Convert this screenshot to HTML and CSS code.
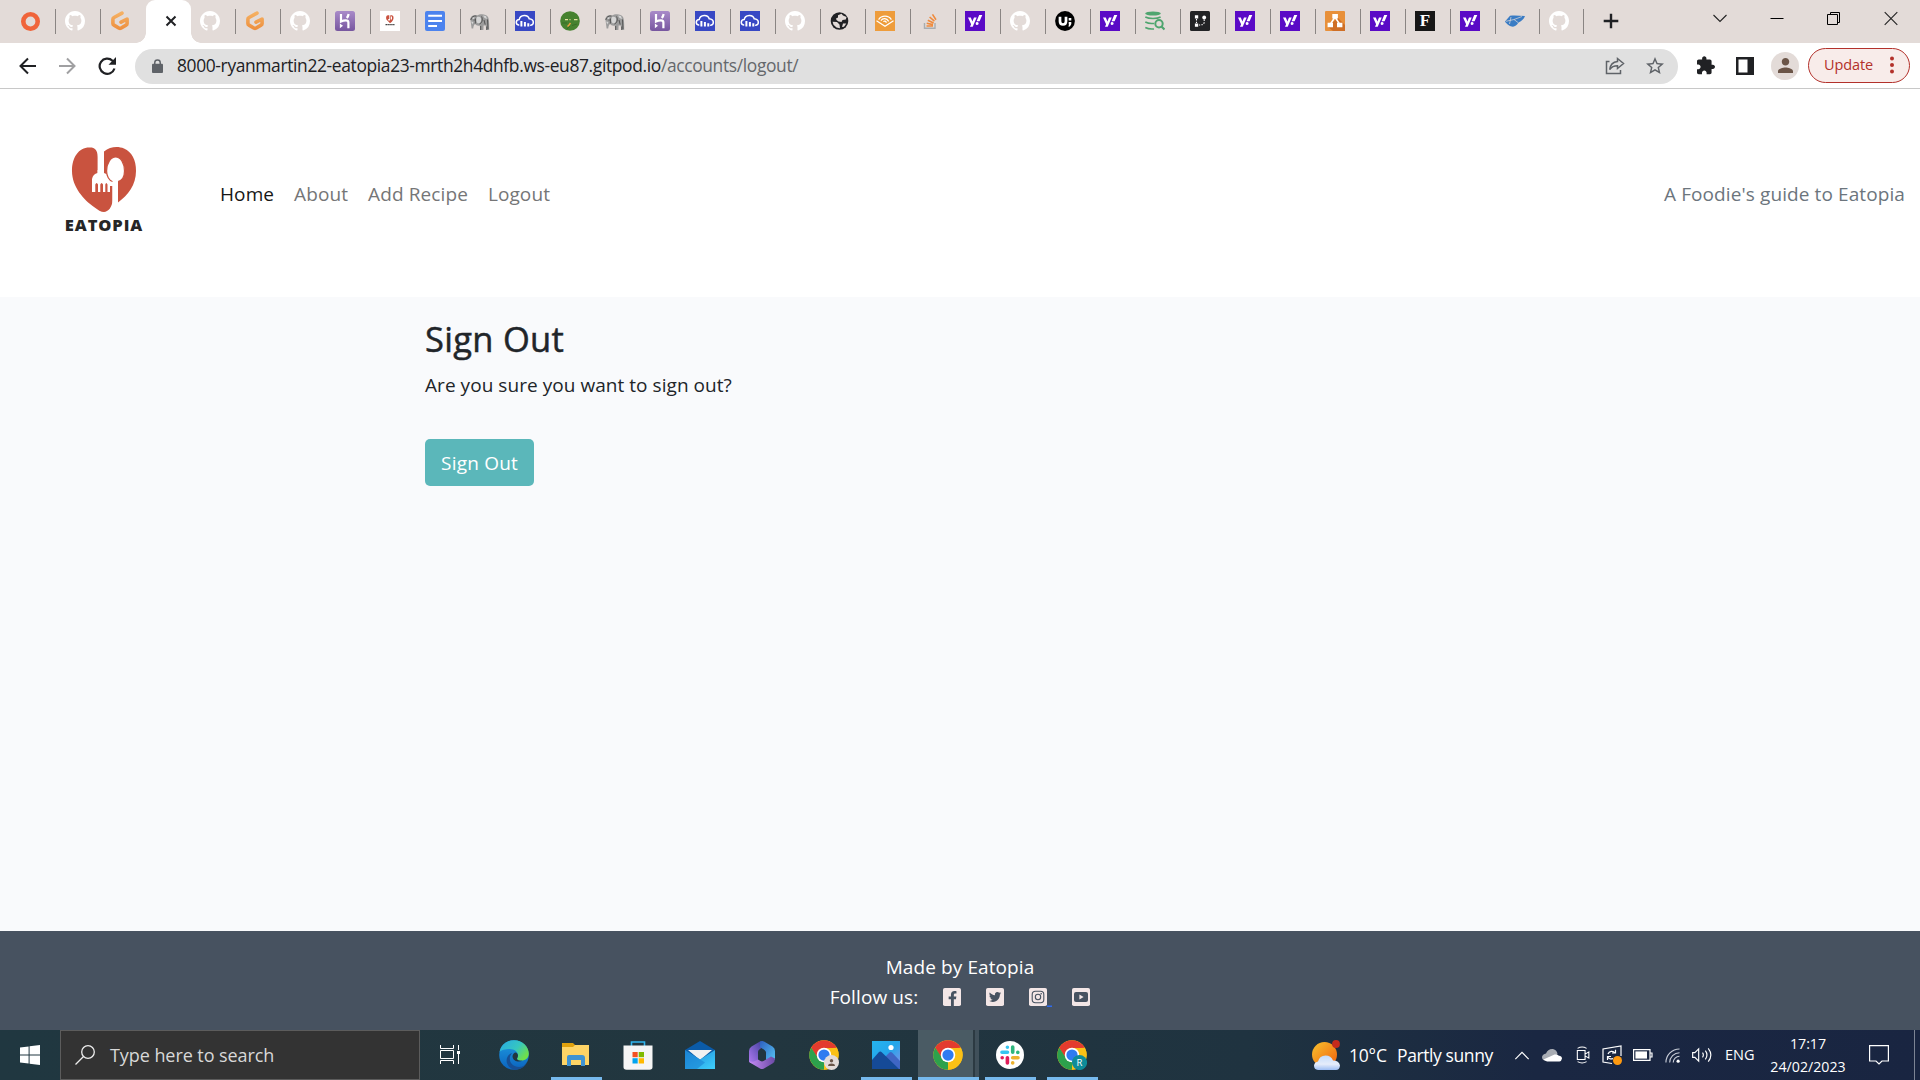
FILE: index.html
```html
<!DOCTYPE html>
<html lang="en">
<head>
<meta charset="utf-8">
<title>Eatopia - Sign Out</title>
<link rel="stylesheet" href="styles.css">
</head>
<body>
<svg class="sprite" aria-hidden="true">
  <defs>
    <linearGradient id="gp" x1="0" y1="0" x2="0" y2="1"><stop offset="0" stop-color="#f5b062"/><stop offset="1" stop-color="#ee9140"/></linearGradient>
    <linearGradient id="hk" x1="0" y1="0" x2="0" y2="1"><stop offset="0" stop-color="#a98bc9"/><stop offset="1" stop-color="#77569f"/></linearGradient>
    <linearGradient id="eg1" x1="0" y1="0" x2="1" y2=".6"><stop offset="0" stop-color="#27a9e6"/><stop offset=".6" stop-color="#36c6c0"/><stop offset="1" stop-color="#6fe04a"/></linearGradient>
    <linearGradient id="eg2" x1="0" y1="0" x2="0" y2="1"><stop offset="0" stop-color="#1f9be2"/><stop offset="1" stop-color="#0b63bd"/></linearGradient>
    <linearGradient id="ml" x1="0" y1="0" x2="1" y2="1"><stop offset="0" stop-color="#1c86d8"/><stop offset="1" stop-color="#3fd0fb"/></linearGradient>
    <linearGradient id="m1" x1="0" y1="1" x2="1" y2="0"><stop offset="0" stop-color="#b07bf0"/><stop offset="1" stop-color="#3f3f9d"/></linearGradient>
    <linearGradient id="m2" x1="0" y1="0" x2="1" y2="1"><stop offset="0" stop-color="#2d5fc0"/><stop offset="1" stop-color="#58c8f5"/></linearGradient>
    <linearGradient id="m3" x1="0" y1="0" x2="1" y2="0"><stop offset="0" stop-color="#c58bf5"/><stop offset="1" stop-color="#6b4aa5"/></linearGradient>
    <linearGradient id="sun" x1="0" y1="0" x2="1" y2="1"><stop offset="0" stop-color="#f9c22e"/><stop offset="1" stop-color="#f0600c"/></linearGradient>
    <linearGradient id="cl" x1="0" y1="0" x2="0" y2="1"><stop offset="0" stop-color="#c3dcfb"/><stop offset=".6" stop-color="#e6edfb"/><stop offset="1" stop-color="#9dbdf3"/></linearGradient>
    <linearGradient id="ph" x1="0" y1="0" x2="1" y2="1"><stop offset="0" stop-color="#25b3ee"/><stop offset=".5" stop-color="#25a5ea"/><stop offset="1" stop-color="#8f8fe8"/></linearGradient>
  </defs>
  <symbol id="ring" viewBox="0 0 20 20"><circle cx="10.5" cy="10.5" r="7.2" fill="none" stroke="#f0643a" stroke-width="4.6"/></symbol>
  <symbol id="github" viewBox="0 0 16 16"><path fill="#fff" d="M8 0C3.58 0 0 3.58 0 8c0 3.54 2.29 6.53 5.47 7.59.4.07.55-.17.55-.38 0-.19-.01-.82-.01-1.49-2.01.37-2.53-.49-2.69-.94-.09-.23-.48-.94-.82-1.13-.28-.15-.68-.52-.01-.53.63-.01 1.08.58 1.23.82.72 1.21 1.87.87 2.33.66.07-.52.28-.87.51-1.07-1.78-.2-3.64-.89-3.64-3.95 0-.87.31-1.59.82-2.15-.08-.2-.36-1.02.08-2.12 0 0 .67-.21 2.2.82.64-.18 1.32-.27 2-.27s1.36.09 2 .27c1.53-1.04 2.2-.82 2.2-.82.44 1.1.16 1.92.08 2.12.51.56.82 1.27.82 2.15 0 3.07-1.87 3.75-3.65 3.95.29.25.54.73.54 1.48 0 1.07-.01 1.93-.01 2.2 0 .21.15.46.55.38A8.01 8.01 0 0016 8c0-4.42-3.58-8-8-8z"/></symbol>
  <symbol id="gitpod" viewBox="0 0 20 20"><path fill="none" stroke="url(#gp)" stroke-width="3.6" stroke-linecap="round" stroke-linejoin="round" d="M12 2.100L4 6.500Q2.900 7.100 2.900 8.200V12.400Q2.900 13.500 4 14.100L9.200 17.200Q10 17.600 10.800 17.200L16 14.100Q17.100 13.500 17.100 12.400V8L11 11.200"/></symbol>
  <symbol id="heroku" viewBox="0 0 20 20"><rect width="20" height="20" rx="2.5" fill="url(#hk)"/><path fill="none" stroke="#fff" stroke-width="2.2" d="M6 3 V10.6 C9 9.2 13.4 8.6 13.4 11.4 V17.2 M13.6 3 C13.4 4.6 12.7 6 11.8 7"/><path fill="#fff" d="M4.9 12.4 L8 14.8 L4.9 17.2Z"/></symbol>
  <symbol id="eatopia-mini" viewBox="0 0 20 20"><path fill="#fff" d="M0 0H20V20H0Z"/><path fill="#c9523f" d="M9.3 4.300C6.400 3.500 5.500 6 6.400 8.500L10 12.200C13 10.500 14 7.500 13.400 5.500C12.700 3.800 10.500 4 10.200 4.500V8.500H9.300Z"/><path fill="#fff" d="M10.800 5.500H12V8.500H10.800ZM8.200 8H10V9.500H8.200Z"/><path stroke="#444" stroke-width="1.300" stroke-dasharray="1.500 .4" d="M5.500 13.700H14.500"/></symbol>
  <symbol id="docs" viewBox="0 0 20 20"><rect width="20" height="20" rx="2" fill="#4c83ee"/><path stroke="#fff" stroke-width="2" d="M3.200 4.700H17M3.200 10H17M3.200 15H12"/></symbol>
  <symbol id="elephant" viewBox="0 0 20 20"><path fill="#9b9b9b" d="M.5 9C0 5.500 3 3.500 7 4.500C10 2.500 16 2.500 18 6C19.500 9 19.200 15 19.200 19H16.300L15.700 14.500L13.600 14.500L13.400 19H10.200L9.800 14.500C8 15 6 14.500 5.200 13C3.500 14 3.600 15.500 3.200 17.500L1.600 17.500C1.300 14.500.8 12 .5 9Z"/><path fill="#d5d5d5" d="M7 6C9.500 5 12 6.500 11 10C10.500 12.500 8 13 7 11.500C6.200 10 6 7.500 7 6ZM13 4.500L16 5L17 8L14.500 7ZM2 7L4.500 6L4 8.500ZM1.200 10.500L3.500 11L2.200 13.500Z"/><path fill="none" stroke="#4c4c4c" stroke-width=".9" d="M11.500 5.500C13.200 8.500 12 12 9.500 13M3.500 9H4.800M14 9L15.200 13.500M17.500 8.500L18 18M.8 9C1 6 4 4.500 6.500 5M10.700 15V19M16.800 15.500V19M5.500 7.500L5.300 12.500"/></symbol>
  <symbol id="cloud" viewBox="0 0 20 20"><path fill="#3848c4" d="M0 0H20V20H0Z"/><path fill="none" stroke="#fff" stroke-width="1.500" stroke-linecap="round" d="M3.600 14C.2 13.200 .6 8.800 4.200 8.600C5.200 3.200 13 3.200 14.200 7.800C19.400 8.300 19.400 13.600 15.800 14.300"/><path stroke="#fff" stroke-width="2" d="M6.400 10V15.500M9.900 11V15.500M13.300 12.200V15.500"/></symbol>
  <symbol id="snake" viewBox="0 0 20 20"><circle cx="10" cy="10" r="9.800" fill="#46822f"/><path stroke="#e4e3a0" stroke-width="1.200" d="M5 8.600H8M9.500 8.600H10.500M14 8.600H17.500"/><path fill="none" stroke="#f0a040" stroke-width="1.400" d="M10.500 12L9 14L7.500 15.500"/><path fill="none" stroke="#356a24" stroke-width=".8" d="M2 12H7M12 14.500L17 13M7 18L10 15"/></symbol>
  <symbol id="globe" viewBox="0 0 20 20"><circle cx="9.500" cy="10" r="8.800" fill="#202124"/><path fill="#e3dbd8" d="M8 4.200L11.500 2.800L13 4.500L16.500 6L15.800 8.500L12.500 9L11.500 11L8.500 10.500L6.500 9L6 7.500L8 6.500ZM2.600 10.800L7 11L9.500 13.500L10 17.200L6.500 16.500L3.500 13.800ZM13 12.500H16.300L14 15.800L12 16Z"/></symbol>
  <symbol id="audible" viewBox="0 0 20 20"><path fill="#ee9c3b" d="M0 0H20V20H0Z"/><path fill="none" stroke="#fff" stroke-width="1.200" d="M1.500 9.800L10 15.200L18.500 9.800M3.600 8.600C6.500 4 13.500 4 16.400 8.600M5.900 9.600C8 6.600 11.600 7.100 13.700 10.300M8.400 10.700C9.500 9.600 10.700 10.100 11.500 11.600"/></symbol>
  <symbol id="stack" viewBox="0 0 20 20"><path fill="none" stroke="#a9adb0" stroke-width="1.400" d="M4.500 12V17.300H15V12"/><path stroke="#ef8a3c" stroke-width="1.600" d="M6.500 15H13M6.700 12.300L13 13.600M7.800 9.200L13.600 12M9.600 6L14.400 10.200M12.500 3.400L16 8.700"/></symbol>
  <symbol id="yahoo" viewBox="0 0 20 20"><path fill="#5a0ac6" d="M0 0H20V20H0Z"/><path fill="#fff" d="M3 6.400H5.800L7.400 10.500L9 6.400H11.700L7.700 15.800H5L6.100 13.200ZM14.200 4H17.300L14.600 10.300H11.600ZM12.200 11A1.500 1.500 0 1 1 12.100 14A1.500 1.500 0 0 1 12.200 11Z"/></symbol>
  <symbol id="udot" viewBox="0 0 20 20"><circle cx="10" cy="10" r="9.900"/><path fill="none" stroke="#fff" stroke-width="2.700" d="M5 5.800V10.200C5 14.600 11 14.600 11 10.200V5.800"/><path fill="#fff" d="M13.700 7H16.300V9.400H13.700ZM13.700 11H16.300V13L14.900 15.500H13.300L14.100 13.600H13.700Z"/></symbol>
  <symbol id="dbsearch" viewBox="0 0 20 20"><ellipse cx="8" cy="2.500" rx="7.800" ry="2" fill="#4fa56f"/><path fill="none" stroke="#4fa56f" stroke-width="1.500" d="M.3 6C4 8 12 8 15.600 6M.3 11C3 12.500 6 12.800 9 12.400M.3 16.500C3 18 6 18.200 9 17.900"/><circle cx="14" cy="12.700" r="3.700" fill="none" stroke="#4fa56f" stroke-width="2"/><path stroke="#4fa56f" stroke-width="2.200" d="M16.500 15.500L19.500 18.600"/></symbol>
  <symbol id="gitdark" viewBox="0 0 20 20"><rect width="20" height="20" rx="1.500" fill="#222325"/><path fill="#fff" d="M4.900 4.300H8.200V7.600H4.900ZM4.900 12.400H8.200V15.700H4.900Z"/><circle cx="14.200" cy="6.500" r="1.900" fill="#fff"/><path fill="none" stroke="#fff" stroke-width="1.100" stroke-dasharray="1.500 1.200" d="M6.500 8V12M14.200 8.500V11C14.200 13.500 12 14 9 14"/></symbol>
  <symbol id="drawio" viewBox="0 0 20 20"><rect width="20" height="20" rx="1" fill="#e8903a"/><path fill="#cf6f26" d="M13 7L20 14V20H8L3 16L8 11Z"/><path stroke="#fff" stroke-width="1.500" d="M10 6L5.500 13M10 6L14.500 13"/><path fill="#fff" d="M7.300 3H12.900V7.600H7.300ZM2.600 11.700H8V16.200H2.600ZM12 11.700H17.400V16.200H12Z"/></symbol>
  <symbol id="kite" viewBox="0 0 20 20"><path fill="#3a7cc4" d="M0 10.500L5 4.800C10 3.800 15 5 20 5C19 8 16 10.500 13.500 11.500C12 14 10 15.500 8 15.800C5 15.500 1.500 13 0 10.500Z"/><path fill="none" stroke="#e3dbd8" stroke-width=".7" d="M1 10.300L9 8.500L17 5.500M6 6L4.500 13M9 8.500L13 11.500"/></symbol>
  <symbol id="chrome" viewBox="0 0 48 48"><circle cx="24" cy="24" r="23.500" fill="#fbc116"/><path fill="#e33b2e" d="M3.700 12.200A23.500 23.500 0 0 1 44.300 12.200L24 13.500L13.500 29.500Z"/><path fill="#2da14c" d="M3.700 12.200L14.800 29.500L24 35L24 47.500A23.500 23.500 0 0 1 3.700 12.200Z"/><path fill="#fbc116" d="M24 13.200H44.800A23.500 23.500 0 0 1 23.500 47.500L34 30Z"/><circle cx="24" cy="24" r="11.600" fill="#fff"/><circle cx="24" cy="24" r="9" fill="#2f7bf0"/></symbol>
</svg>

<header class="browser">
  <div class="tabstrip">
    <div class="tabs">
      <div class="tab"><svg><use href="#ring"/></svg></div>
      <div class="tab"><svg><use href="#github"/></svg></div>
      <div class="tab tab-plain"><svg><use href="#gitpod"/></svg></div>
      <div class="tab tab-active"><svg viewBox="0 0 20 20"><path d="M5.500 5.500L14.500 14.500M14.500 5.500L5.500 14.500" stroke="#202124" stroke-width="2"/></svg></div>
      <div class="tab"><svg><use href="#github"/></svg></div>
      <div class="tab"><svg><use href="#gitpod"/></svg></div>
      <div class="tab"><svg><use href="#github"/></svg></div>
      <div class="tab"><svg><use href="#heroku"/></svg></div>
      <div class="tab"><svg><use href="#eatopia-mini"/></svg></div>
      <div class="tab"><svg><use href="#docs"/></svg></div>
      <div class="tab"><svg><use href="#elephant"/></svg></div>
      <div class="tab"><svg><use href="#cloud"/></svg></div>
      <div class="tab"><svg><use href="#snake"/></svg></div>
      <div class="tab"><svg><use href="#elephant"/></svg></div>
      <div class="tab"><svg><use href="#heroku"/></svg></div>
      <div class="tab"><svg><use href="#cloud"/></svg></div>
      <div class="tab"><svg><use href="#cloud"/></svg></div>
      <div class="tab"><svg><use href="#github"/></svg></div>
      <div class="tab"><svg><use href="#globe"/></svg></div>
      <div class="tab"><svg><use href="#audible"/></svg></div>
      <div class="tab"><svg><use href="#stack"/></svg></div>
      <div class="tab"><svg><use href="#yahoo"/></svg></div>
      <div class="tab"><svg><use href="#github"/></svg></div>
      <div class="tab"><svg><use href="#udot"/></svg></div>
      <div class="tab"><svg><use href="#yahoo"/></svg></div>
      <div class="tab"><svg><use href="#dbsearch"/></svg></div>
      <div class="tab"><svg><use href="#gitdark"/></svg></div>
      <div class="tab"><svg><use href="#yahoo"/></svg></div>
      <div class="tab"><svg><use href="#yahoo"/></svg></div>
      <div class="tab"><svg><use href="#drawio"/></svg></div>
      <div class="tab"><svg><use href="#yahoo"/></svg></div>
      <div class="tab"><span class="letter-icon">F</span></div>
      <div class="tab"><svg><use href="#yahoo"/></svg></div>
      <div class="tab tab-narrow"><svg><use href="#kite"/></svg></div>
      <div class="tab tab-narrow"><svg><use href="#github"/></svg></div>
    </div>
    <svg class="new-tab" viewBox="0 0 16 16"><path d="M8 .7V15.300M.7 8H15.300" stroke="#202124" stroke-width="2.400"/></svg>
    <div class="window-buttons">
      <svg viewBox="0 0 16 16"><path d="M1.500 5L8 11.500L14.500 5" fill="none" stroke="#222" stroke-width="1.100"/></svg>
      <svg viewBox="0 0 16 16"><path d="M1.500 8.500H14.500" stroke="#000"/></svg>
      <svg viewBox="0 0 16 16"><path d="M1.500 4.500H11.500V14.500H1.500ZM4.500 4.500V2.500H13.500V12.500H11.500" fill="none" stroke="#000"/></svg>
      <svg viewBox="0 0 16 16"><path d="M1.700 2.200L14.300 14.800M14.300 2.200L1.700 14.800" stroke="#222" stroke-width="1.100"/></svg>
    </div>
  </div>

  <div class="toolbar">
    <div class="nav-buttons">
      <svg viewBox="0 0 20 20"><path d="M18 10H3M10 2.500L2.500 10L10 17.500" fill="none" stroke="#202124" stroke-width="2"/></svg>
      <svg viewBox="0 0 20 20"><path d="M1 10H16M9 2.500L16.500 10L9 17.500" fill="none" stroke="#a0a0a2" stroke-width="2"/></svg>
      <svg viewBox="0 0 20 20"><path d="M16.500 12.500A7.600 7.600 0 1 1 14.500 4.700L16 6.300" fill="none" stroke="#202124" stroke-width="2.200"/><path fill="#202124" d="M18 1V8.700H10.500Z"/></svg>
    </div>
    <div class="omnibox">
      <svg class="lock" viewBox="0 0 12 16"><path fill="#5f6368" d="M1 5H11Q12 5 12 6V14Q12 15 11 15H1Q0 15 0 14V6Q0 5 1 5Z"/><path fill="none" stroke="#5f6368" stroke-width="1.600" d="M3 6V3.800A3 3 0 0 1 9 3.800V6"/></svg>
      <span class="url"><span class="host">8000-ryanmartin22-eatopia23-mrth2h4dhfb.ws-eu87.gitpod.io</span><span class="path">/accounts/logout/</span></span>
      <svg class="share" viewBox="0 0 20 20"><path fill="none" stroke="#5f6368" stroke-width="1.500" d="M4.500 5.500H1.500V17.500H15.500V14M12.500 2.500L18.500 7.500L12.500 12.500V9.700C8.500 9.700 6.500 10.800 4.700 13.500C5.200 9 8 6 12.500 5.500Z"/></svg>
      <svg class="star" viewBox="2 2 20 20"><path fill="#5f6368" d="M22 9.240l-7.190-.62L12 2 9.190 8.630 2 9.240l5.460 4.730L5.820 21 12 17.270 18.180 21l-1.630-7.030L22 9.240zM12 15.400l-3.760 2.270 1-4.280-3.320-2.880 4.380-.38L12 6.100l1.710 4.040 4.380.38-3.320 2.880 1 4.280L12 15.400z"/></svg>
    </div>
    <div class="tools">
      <svg class="ext" viewBox="2 2 21 21"><path fill="#202124" d="M20.500 11H19V7c0-1.100-.9-2-2-2h-4V3.500C13 2.120 11.880 1 10.500 1S8 2.120 8 3.500V5H4c-1.100 0-1.990.9-1.990 2v3.800H3.500c1.490 0 2.700 1.210 2.700 2.700s-1.210 2.700-2.700 2.700H2V20c0 1.100.9 2 2 2h3.800v-1.500c0-1.490 1.210-2.700 2.700-2.700 1.490 0 2.700 1.210 2.700 2.700V22H17c1.100 0 2-.9 2-2v-4h1.500c1.380 0 2.500-1.120 2.500-2.500S21.880 11 20.500 11z"/></svg>
      <svg class="panel" viewBox="0 0 18 18"><path fill="#202124" fill-rule="evenodd" d="M0 0H18V18H0ZM2.500 2.500V15.500H11.500V2.500Z"/></svg>
      <span class="avatar"><svg viewBox="4 4 16 16"><path fill="#6b5548" d="M12 12c2.210 0 4-1.790 4-4s-1.790-4-4-4-4 1.790-4 4 1.790 4 4 4zm0 2c-2.670 0-8 1.340-8 4v2h16v-2c0-2.660-5.330-4-8-4z"/></svg></span>
      <span class="update">Update<svg viewBox="0 0 4 18"><circle cx="2" cy="2.500" r="2" fill="#b3312b"/><circle cx="2" cy="9" r="2" fill="#b3312b"/><circle cx="2" cy="15.500" r="2" fill="#b3312b"/></svg></span>
    </div>
  </div>
</header>

<div class="page">
  <nav class="site-nav">
    <a class="logo">
      <svg viewBox="0 0 88 66"><path fill="#c9533f" d="M37.600 40V11C37.600 4 35 1.500 30 1.500C19 1 12 11 12 25C12 41 24 54 34 61C38 64 41 66 44 66C48 66 52.500 61 52.500 54V40ZM44 5.500C50 .5 58 0 64 2.500C72 6 76 14 76 25C76 39 68 49 58 56.500V35H44Z"/><path fill="#fff" d="M37.600 24H44V27Q47.300 27.500 49 30.500L50 32V46H32V33Q33 28 37.600 27Z"/><path fill="#c9533f" d="M35.300 46V38.500Q36.600 35.500 38 38.500V46ZM40.300 46V38.500Q41.600 35.500 43 38.500V46ZM45.300 46V38.500Q46.200 35.500 47.500 38.500V46Z"/><path fill="#fff" stroke="#c9533f" stroke-width="1.200" d="M55.600 11C60.500 11 64.500 17 64.500 25C64.500 31 62 34.500 58 35.500H52.500C49 34.500 46.600 30 46.600 25C46.600 17 51 11 55.600 11Z"/><path fill="#fff" d="M52.500 34H58V58L52.500 61Z"/></svg>
      <span>EATOPIA</span>
    </a>
    <div class="links">
      <a class="current">Home</a>
      <a>About</a>
      <a>Add Recipe</a>
      <a>Logout</a>
    </div>
    <span class="tagline">A Foodie's guide to Eatopia</span>
  </nav>

  <main class="content">
    <h1>Sign Out</h1>
    <p>Are you sure you want to sign out?</p>
    <button class="btn">Sign Out</button>
  </main>

  <footer class="site-footer">
    <p class="made">Made by Eatopia</p>
    <div class="follow">
      <span>Follow us:</span>
      <svg viewBox="0 0 18 18"><rect width="18" height="18" rx="1.800" fill="#f3e6e6"/><path fill="#475260" transform="translate(5 3) scale(.0285)" d="M279.140 288l14.220-92.660h-88.910v-60.130c0-25.350 12.420-50.060 52.240-50.060h40.420V6.260S260.430 0 225.360 0c-73.220 0-121.080 44.380-121.080 124.720v70.620H22.890V288h81.390v240h100.170V288z"/></svg>
      <svg viewBox="0 0 18 18"><rect width="18" height="18" rx="1.800" fill="#f3e6e6"/><path fill="#475260" transform="translate(2.900 2.900) scale(.51)" d="M23.953 4.570a10 10 0 01-2.825.775 4.958 4.958 0 002.163-2.723c-.951.555-2.005.959-3.127 1.184a4.920 4.920 0 00-8.384 4.482C7.690 8.095 4.067 6.130 1.640 3.162a4.822 4.822 0 00-.666 2.475c0 1.710.870 3.213 2.188 4.096a4.904 4.904 0 01-2.228-.616v.06a4.923 4.923 0 003.946 4.827 4.996 4.996 0 01-2.212.085 4.936 4.936 0 004.604 3.417 9.867 9.867 0 01-6.102 2.105c-.390 0-.779-.023-1.170-.067a13.995 13.995 0 007.557 2.209c9.053 0 13.998-7.496 13.998-13.985 0-.210 0-.420-.015-.630A9.935 9.935 0 0024 4.590z"/></svg>
      <svg class="insta" viewBox="0 0 18 18"><rect width="18" height="18" rx="1.800" fill="#f3e6e6"/><rect x="3.200" y="3.200" width="11.600" height="11.600" rx="3.200" fill="none" stroke="#475260" stroke-width="1.100"/><circle cx="9" cy="9" r="2.700" fill="none" stroke="#475260" stroke-width="1.100"/><circle cx="12.200" cy="5.800" r=".8" fill="#475260"/><path fill="#2f6bf0" d="M18 17.500H23V19H18Z"/></svg>
      <svg viewBox="0 0 18 18"><rect width="18" height="18" rx="1.800" fill="#f3e6e6"/><rect x="2" y="4" width="14" height="10" rx="2" fill="#475260"/><path fill="#f3e6e6" d="M7.400 6.600L11.600 9L7.400 11.400Z"/></svg>
    </div>
  </footer>
</div>

<div class="taskbar">
  <span class="start"><svg viewBox="0 0 20 20"><path fill="#fff" d="M0 2.600L8.600 1.400V9.500H0ZM9.600 1.200L20 0V9.500H9.600ZM0 10.500H8.600V18.600L0 17.400ZM9.600 10.500H20V20L9.600 18.800Z"/></svg></span>
  <div class="search"><svg viewBox="0 0 20 20"><circle cx="13" cy="7" r="6.300" fill="none" stroke="#eee" stroke-width="1.300"/><path d="M8.500 11.500L.5 19.500" stroke="#eee" stroke-width="1.300"/></svg><span>Type here to search</span></div>
  <span class="taskview"><svg viewBox="0 0 20 20"><path fill="none" stroke="#fff" d="M.5 0V3.500H13.500V0M.5 19V15.500H13.500V19M.5 5.500H13.500V13.500H.5ZM18.500 0V5M18.500 9V19"/><path fill="#fff" d="M17 6H20V9H17Z"/></svg></span>
  <div class="apps">
    <span class="app"><svg viewBox="0 0 30 30"><circle cx="15" cy="15" r="14.800" fill="url(#eg2)"/><path fill="#174f94" d="M13 13C8 19 12 27 20 27C24 27 26 25 28 22.500C26 27 21 30 15 29.800C6 27 5 16 13 13Z"/><path fill="url(#eg1)" d="M.6 12C2 4 8 .2 15 .2C24 .2 29.800 7 29.800 13.500C29.800 18 26.500 20.500 22.500 20.500C19 20.500 17.300 19.500 18.500 17.500C20.500 13 16 9 11 9C6 9 2 10 .6 12Z"/><path fill="#22363f" d="M18.500 17.500C17 19.500 19 21 23.500 20.800C20 22.500 14 21.500 13.500 16.500C13.500 14.500 15 12.500 17 12.500C19 13.500 19.500 15.500 18.500 17.500Z"/></svg></span>
    <span class="app open"><svg viewBox="0 0 30 30"><path fill="#e0a10d" d="M1 3H12L14 5H27V9H1Z"/><path fill="#fed466" d="M1 7H12L14 5H28V25H1Z"/><path fill="#3f93d3" d="M8 15H21Q24 15 24 18V26H20V20H10V26H6V17Q6 15 8 15Z"/></svg></span>
    <span class="app"><svg viewBox="0 0 30 30"><path fill="none" stroke="#30b5ee" stroke-width="1.600" d="M8.500 7V2H21.500V7"/><path fill="#f5f5f5" d="M.5 5.500H29.500V27Q29.500 29.800 26.500 29.800H3.500Q.5 29.800 .5 27Z"/><path fill="#f25022" d="M9.500 12H14.700V17.200H9.500Z"/><path fill="#7fba00" d="M15.700 12H21V17.200H15.700Z"/><path fill="#00a4ef" d="M9.500 18.200H14.700V23.500H9.500Z"/><path fill="#ffb900" d="M15.700 18.200H21V23.500H15.700Z"/></svg></span>
    <span class="app"><svg viewBox="0 0 30 30"><path fill="#0b5ba8" d="M0 10L15 1L30 10L15 20Z"/><path fill="#f1f1f1" d="M3 10H27L15 20Z"/><path fill="url(#ml)" d="M0 10L15 19.500L30 10V29H0Z"/><path fill="#1b83d3" opacity=".6" d="M0 10L20 22.500L12 29H0Z"/></svg></span>
    <span class="app"><svg viewBox="0 0 30 30"><path fill="url(#m1)" d="M13 1.500L4.500 6.500Q2 8 2 11V21Q2 22.500 3.500 23L8 23.500L11 20V12Q11 10 13 9L16 7V1.300Z"/><path fill="url(#m2)" d="M13 1.500Q15 .5 17 1.500L25.500 6.500Q28 8 28 11V19L25 22.500L19 19.500V12.500Q19 11 17.500 10L13 7Z"/><path fill="url(#m3)" d="M28 18.500Q28 22 25.500 23.500L17 28.500Q15 29.500 13 28.500L4.500 23.500Q2.500 22.500 2 20.500Q4 22.500 7 21.500L11 19.500L13.500 21Q15 21.800 16.500 21L24 16.500Z"/></svg></span>
    <span class="app"><svg viewBox="0 0 30 30"><use href="#chrome" width="30" height="30"/><circle cx="22.500" cy="22.500" r="7.500" fill="#e3dbd8"/><circle cx="22.500" cy="20.800" r="1.700" fill="#6b5548"/><path fill="#6b5548" d="M19 26C19 22.800 26 22.800 26 26Z"/></svg></span>
    <span class="app open"><svg viewBox="0 0 30 30"><path fill="url(#ph)" d="M1 1H29V29H1Z"/><path fill="#3f66c4" d="M12 19L18.500 12.500Q20 11.500 21.500 13L29 21V29H10Z"/><path fill="#154a97" d="M1 20L8 12Q9.500 11 11 12.500L28 29H1Z"/><circle cx="20" cy="7.500" r="2.600" fill="#fff"/></svg></span>
    <span class="app open focused"><svg viewBox="0 0 30 30"><use href="#chrome" width="30" height="30"/></svg></span>
    <span class="app open"><svg viewBox="0 0 30 30"><circle cx="15" cy="15" r="14" fill="#fff"/><g stroke-width="3.600" stroke-linecap="round"><path stroke="#36c5f0" d="M7 12.300H12.500M12.400 7.200V7.300"/><path stroke="#2eb67d" d="M17.700 7V12.300M22.800 12.300V12.400"/><path stroke="#ecb22e" d="M17.700 17.700H23M17.700 22.800V22.900"/><path stroke="#e01e5a" d="M12.400 17.700V23M7.200 17.700V17.800"/></g></svg></span>
    <span class="app open"><svg viewBox="0 0 30 30"><use href="#chrome" width="30" height="30"/><circle cx="22.500" cy="22.500" r="7.600" fill="#0e8c99"/><text class="badge-letter" x="22.500" y="26">R</text></svg></span>
  </div>
  <div class="tray">
    <svg class="weather" viewBox="0 0 30 30"><circle cx="13.500" cy="14.500" r="12.500" fill="url(#sun)"/><circle cx="25" cy="4" r="3.900" fill="#c42b1c"/><path fill="url(#cl)" d="M7 30Q3 29.500 3 25.500Q3.500 22 7 21.500Q8.500 15.500 14.500 15.500Q20 15.500 22 20.500Q28 20.500 29 25.500Q28.500 30 25 30Z"/></svg>
    <span class="temp">10°C</span>
    <span class="forecast">Partly sunny</span>
    <svg class="i-up" viewBox="0 0 16 10"><path fill="none" stroke="#fff" stroke-width="1.300" d="M.6 9L8 1.500L15.400 9"/></svg>
    <svg class="i-cloud" viewBox="0 0 20 14"><path fill="#a9adb4" d="M4 13Q0 12.500 0 9Q.5 6 4 5.500Q6 .5 11 1Q15 2 15.500 6L10 13Z"/><path fill="#fff" d="M4 13L1.500 11.500L12.500 6.500Q15.500 6 16.500 7.500Q20 8 20 10.500Q19.500 13 17.500 13.500H5Z"/></svg>
    <svg class="i-cam" viewBox="0 0 16 20"><path fill="none" stroke="#fff" stroke-width="1.200" d="M1.700 5H10.300V15H1.700ZM10.300 9L14.500 6.500V13.500L10.300 11M2 2.600Q7 -.5 12 2.600M2 17.400Q7 20.500 12 17.400"/></svg>
    <svg class="i-upd" viewBox="0 0 20 20"><path fill="none" stroke="#fff" stroke-width="1.200" d="M10 18.500L1 17V4L19 1V11M13 8A4 4 0 0 0 6 9M13.500 4.800V8H10M5.500 11.500A4 4 0 0 0 11 13.500M5.500 15V11.500H9"/><circle cx="15.500" cy="15.500" r="4.500" fill="#ff9a10"/></svg>
    <svg class="i-bat" viewBox="0 0 20 12"><path fill="none" stroke="#fff" stroke-width="1.200" d="M.6.6H17V11.400H.6ZM17 4H19V8H17"/><path fill="#fff" d="M2.400 2.400H14V9.600H2.400Z"/></svg>
    <svg class="i-wifi" viewBox="0 0 16 16"><path fill="none" stroke="#c9ced8" stroke-width="1.200" d="M1 15.500A14.500 14.500 0 0 1 15.500 1M5 15.500A10.500 10.500 0 0 1 15.500 5M8.800 15.500A6.700 6.700 0 0 1 15.500 8.800"/><circle cx="14" cy="14" r="1.700" fill="#fff"/></svg>
    <svg class="i-vol" viewBox="0 0 22 16"><path fill="none" stroke="#fff" stroke-width="1.200" d="M.7 5.500H3L7 1.500V14.500L3 10.500H.7ZM11 5.500Q12.800 8 11 10.500M14 3.500Q17.300 8 14 12.500M17 1Q22.500 8 17 15"/></svg>
    <span class="lang">ENG</span>
    <div class="clock"><span>17:17</span><span>24/02/2023</span></div>
    <svg class="i-note" viewBox="0 0 20 20"><path fill="none" stroke="#fff" stroke-width="1.200" d="M.6.6H19.400V16H13L10 19L7 16H.6Z"/></svg>
    <span class="show-desktop"></span>
  </div>
</div>
</body>
</html>
```

FILE: styles.css
```css
* { box-sizing: border-box; }

body {
  margin: 0;
  width: 1920px;
  height: 1080px;
  overflow: hidden;
  display: flex;
  flex-direction: column;
  font-family: "Open Sans", "Noto Sans", sans-serif;
  font-size: 19px;
  letter-spacing: .1px;
  line-height: 30px;
  color: #212529;
  background: #fff;
}

svg { display: block; flex: none; }
h1, p { margin: 0; }
.sprite { width: 0; height: 0; position: absolute; }

/* Browser frame */
.browser { height: 89px; flex: none; border-bottom: 1px solid #c8c8c8; }
.tabstrip { height: 43px; background: #e3dbd8; display: flex; }
.tabs { display: flex; padding-left: 11px; height: 43px; }
.tab { width: 45px; padding: 11px 0 0 9px; position: relative; }
.tab svg { width: 20px; height: 20px; }
.tab::after { content: ""; position: absolute; right: 0; top: 9px; width: 1px; height: 25px; background: #8a8583; }
.tab-narrow { width: 44px; }
.tab-plain::after { display: none; }
.tab-active { background: #fff; border-radius: 9px 9px 0 0; padding: 11px 0 0 15px; }
.tab-active::before,
.tab-active::after { content: ""; display: block; position: absolute; top: 33px; width: 10px; height: 10px; }
.tab-active::before { left: -10px; background: radial-gradient(circle at 0 0, #e3dbd8 9.500px, #fff 10px); }
.tab-active::after { right: -10px; background: radial-gradient(circle at 100% 0, #e3dbd8 9.500px, #fff 10px); }
.letter-icon { display: block; width: 20px; height: 20px; background: #171717; color: #fff; font: bold 17px/20px "Liberation Serif", serif; text-align: center; letter-spacing: 0; }
.new-tab { width: 16px; height: 16px; margin: 13px 0 0 19px; }
.window-buttons { display: flex; gap: 41px; margin: 10px 21px 0 auto; }
.window-buttons svg { width: 16px; height: 16px; }

.toolbar { height: 45px; display: flex; align-items: center; background: #fff; }
.nav-buttons { display: flex; gap: 20px; padding-left: 18px; width: 135px; }
.nav-buttons svg { width: 20px; height: 20px; }
.omnibox { width: 1543px; height: 35px; margin-top: 1px; border-radius: 18px; background: #e0e0e0; display: flex; align-items: center; padding: 0 14px 0 17px; }
.lock { width: 11px; height: 15px; }
.url { margin: -2px 0 0 14px; font-size: 17.400px; letter-spacing: -.35px; white-space: nowrap; }
.host { color: #202124; }
.path { color: #65686c; }
.share { width: 20px; height: 20px; margin-left: auto; }
.star { width: 18px; height: 18px; margin-left: 21px; }
.tools { display: flex; align-items: center; margin-left: 19px; }
.ext { width: 18px; height: 18px; overflow: visible; }
.panel { width: 18px; height: 18px; margin-left: 21px; }
.avatar { width: 28px; height: 28px; border-radius: 50%; background: #e3dbd8; margin-left: 17px; display: grid; place-items: center; }
.avatar svg { width: 15px; height: 15px; }
.update { width: 102px; height: 35px; margin-left: 9px; border: 1.500px solid #b3312b; border-radius: 18px; background: #f8ecea; color: #b3312b; font-size: 14.500px; letter-spacing: -.1px; display: flex; align-items: center; justify-content: space-between; padding: 0 15px 2px; }
.update svg { width: 4px; height: 18px; }

/* Site */
.page { flex: 1; display: flex; flex-direction: column; background: #f9fafc; }
.site-nav { height: 208px; background: #fff; display: flex; padding: 57px 15px 0 60px; color: #757677; }
.logo { display: flex; flex-direction: column; align-items: center; width: 88px; }
.logo svg { width: 88px; height: 66px; }
.logo span { font-size: 16.500px; font-weight: 800; line-height: 20px; margin-top: 3px; color: #262626; letter-spacing: .9px; white-space: nowrap; }
.links { display: flex; gap: 20px; margin: 33px 0 0 72px; }
.links .current { color: #161616; }
.tagline { margin: 33px 0 0 auto; color: #6c757d; }
.content { flex: 1; padding: 20px 0 0 425px; }
.content h1 { font-size: 34.500px; font-weight: 500; line-height: 44px; letter-spacing: .3px; -webkit-text-stroke: .5px #212529; }
.content p { margin-top: 9px; letter-spacing: .05px; }
.btn { display: block; margin: 39px 0 0; width: 109px; height: 47px; border: 0; border-radius: 5px; background: #5bb7ba; color: #fff; font: inherit; letter-spacing: .2px; padding: 0; text-align: center; }
.site-footer { height: 99px; background: #475260; color: #fff; padding-top: 21px; display: flex; flex-direction: column; align-items: center; }
.follow { display: flex; align-items: center; gap: 25px; }
.follow svg { width: 18px; height: 18px; }
.insta { overflow: visible; }

/* Taskbar */
.taskbar { height: 50px; flex: none; display: flex; color: #fff; background: linear-gradient(90deg, #203740 0%, #22363f 40%, #1f3340 65%, #1a2742 80%, #192541 100%); }
.start { width: 60px; padding: 15px 20px; }
.start svg, .taskview svg, .search svg { width: 20px; height: 20px; }
.search { width: 360px; height: 50px; border: 1px solid #5c5c5c; background: #333; display: flex; align-items: center; padding-left: 14px; gap: 15px; color: #d8d8d8; font-size: 18px; letter-spacing: -.07px; }
.taskview { width: 63px; padding: 15px 0 0 20px; }
.apps { display: flex; }
.app { width: 62px; height: 50px; padding: 10px 16px; position: relative; }
.app svg { width: 30px; height: 30px; position: relative; }
.open::after { content: ""; position: absolute; left: 6px; bottom: 0; width: 51px; height: 3px; background: #76b9ed; }
.focused::before { content: ""; position: absolute; left: 1px; top: 0; width: 61px; height: 50px; background: linear-gradient(90deg, #4a5b64 55px, #2c3a42 55px 57px, #40505a 57px); }
.focused::after { left: 1px; width: 61px; }
.badge-letter { font-size: 9.500px; fill: #fff; text-anchor: middle; letter-spacing: 0; }
.tray { flex: 1; display: flex; align-items: center; font-size: 17.500px; letter-spacing: 0; }
.tray span { white-space: nowrap; }
.weather { width: 30px; height: 30px; margin-left: 208px; }
.temp { margin-left: 8px; width: 38px; letter-spacing: -.2px; }
.forecast { margin-left: 10px; width: 97px; letter-spacing: -.4px; }
.i-up { width: 16px; height: 9px; margin-left: 20px; }
.i-cloud { width: 20px; height: 14px; margin-left: 12px; }
.i-cam { width: 16px; height: 18px; margin-left: 13px; }
.i-upd { width: 20px; height: 20px; margin-left: 11px; }
.i-bat { width: 20px; height: 12px; margin-left: 11px; }
.i-wifi { width: 15px; height: 15px; margin-left: 12px; }
.i-vol { width: 21px; height: 16px; margin-left: 12px; }
.lang { margin-left: 12px; width: 30px; font-size: 14.500px; }
.clock { width: 80px; margin-left: 13px; font-size: 14.200px; line-height: 23px; display: flex; flex-direction: column; align-items: center; }
.i-note { width: 20px; height: 20px; margin-left: 21px; }
.show-desktop { width: 1px; height: 50px; margin-left: 25px; background: #7c8494; }
```
